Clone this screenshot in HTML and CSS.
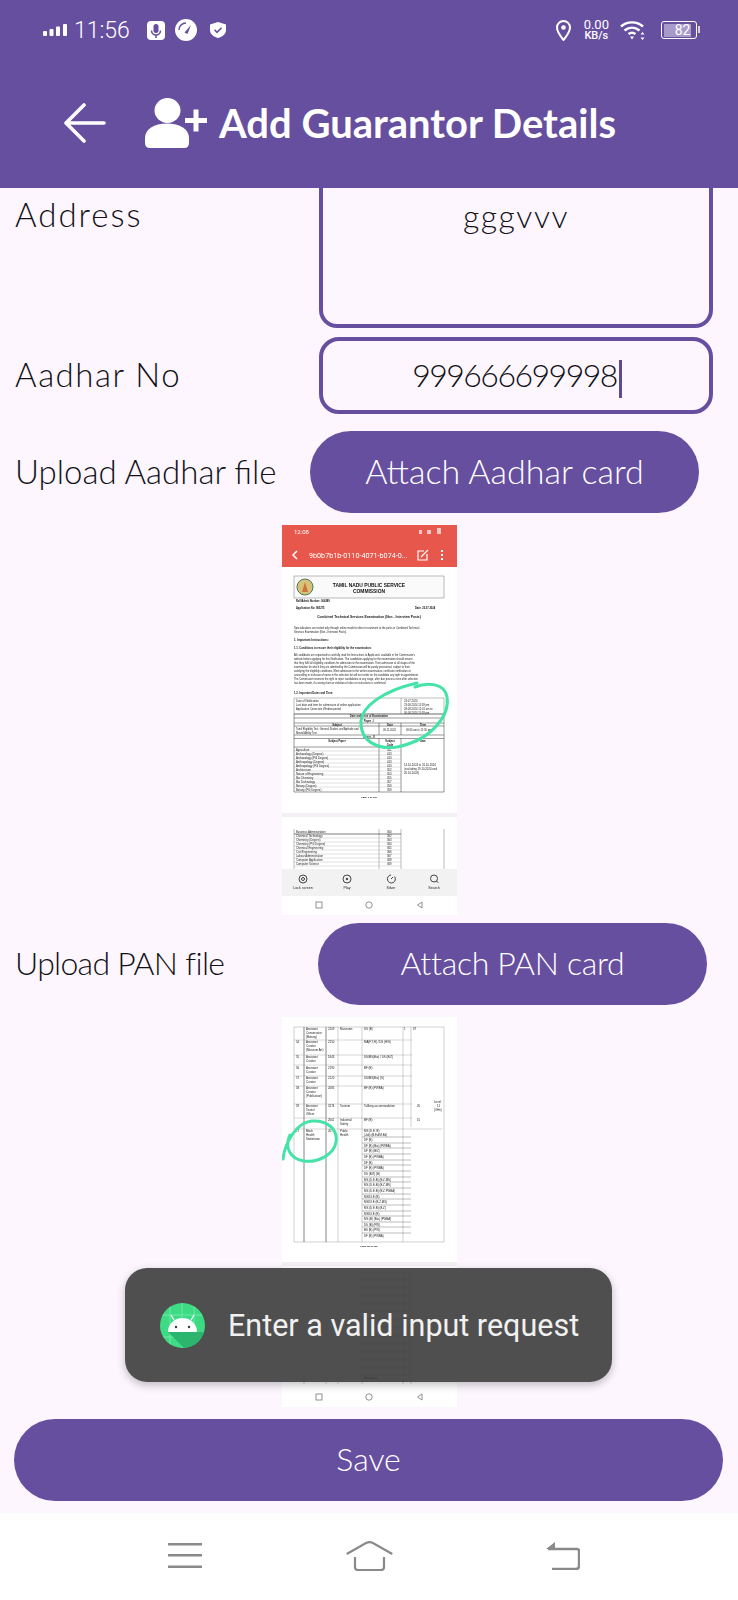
FILE: index.html
```html
<!DOCTYPE html>
<html lang="en">
<head>
  <meta charset="UTF-8">
  <meta name="viewport" content="width=device-width, initial-scale=1.0">
  <title>Add Guarantor Details</title>
  <link rel="stylesheet" href="styles.css">
</head>
<body>
  <div class="phone">
    <header class="app-header">
      <div class="status-bar">
        <div class="status-group">
          <svg class="signal" width="24" height="12" viewBox="0 0 24 12" fill="#fff"><rect x="0" y="7" width="4" height="5" rx="1"/><rect x="6.500" y="5" width="4" height="7" rx="1"/><rect x="13" y="2.500" width="4" height="9.500" rx="1"/><rect x="20" y="0" width="4" height="12" rx="1"/></svg>
          <span class="clock">11:56</span>
          <svg class="ic-mic" width="18" height="19" viewBox="0 0 18 19"><rect width="18" height="19" rx="4" fill="#fff"/><rect x="6.500" y="3" width="5" height="9" rx="2.500" fill="#674fa0"/><path d="M4.500 9.500a4.500 4.500 0 0 0 9 0M9 14v3" fill="none" stroke="#674fa0" stroke-width="1.500"/></svg>
          <svg class="ic-gauge" width="22" height="22" viewBox="0 0 22 22"><circle cx="11" cy="11" r="11" fill="#fff"/><path d="M4 11a7 7 0 0 1 7-7" fill="none" stroke="#674fa0" stroke-width="1.500"/><path d="M9.500 13.500L16 6l-3.500 9z" fill="#674fa0"/></svg>
          <svg class="ic-shield" width="16" height="16" viewBox="0 0 16 16"><path d="M8 0l8 2.500V8c0 4-3.500 6.800-8 8-4.500-1.200-8-4-8-8V2.500z" fill="#fff"/><path d="M4.500 7.800l2.500 2.500 4.500-4.500" fill="none" stroke="#674fa0" stroke-width="1.600"/></svg>
        </div>
        <div class="status-group">
          <svg class="ic-pin" width="15" height="21" viewBox="0 0 15 21"><path d="M7.500 20C4 15.500 1 12 1 7.500a6.500 6.500 0 0 1 13 0C14 12 11 15.500 7.500 20z" fill="none" stroke="#fff" stroke-width="2"/><circle cx="7.500" cy="7.500" r="2.300" fill="#fff"/></svg>
          <div class="speed"><span class="speed-num">0.00</span><span class="speed-unit">KB/s</span></div>
          <svg class="ic-wifi" width="26" height="20" viewBox="0 0 26 20" fill="none" stroke="#fff" stroke-width="2.400"><path d="M1 6.500C7 1 17 1 23 6.500M4.500 10.500c4.500-3.800 10.500-3.800 15 0M8.500 14c2.300-1.700 4.700-1.700 7 0"/><path d="M10 16.500h4L12 19.500z" fill="#fff" stroke="none"/><path d="M22.500 12l2 2.500h-4zM22.500 20l2-2.500h-4z" fill="#fff" stroke="none"/></svg>
          <div class="battery"><span class="battery-fill">82</span></div>
        </div>
      </div>
      <div class="title-row">
        <svg class="ic-back" width="42" height="40" viewBox="0 0 42 40" fill="none" stroke="#fff" stroke-width="3.600" stroke-linecap="round" stroke-linejoin="round"><path d="M40 20H3M20 2L2 20l18 18"/></svg>
        <svg class="ic-person" width="62" height="50" viewBox="0 0 62 50" fill="#fff"><ellipse cx="22.500" cy="12.500" rx="13" ry="12.500"/><path d="M0 45V40C0 31 9 25.500 22 25.500S44 31 44 40v5q0 5-5 5H5q-5 0-5-5z"/><path d="M40 20h8.500v-8.500h5V20H62v5h-8.500v8.500h-5V25H40z"/></svg>
        <h1 class="title">Add Guarantor Details</h1>
      </div>
    </header>

    <main class="form">
      <div class="row row-address">
        <span class="label label-address">Address</span>
        <div class="field field-address">gggvvv</div>
      </div>
      <div class="row row-aadhar">
        <span class="label label-aadhar">Aadhar No</span>
        <div class="field field-aadhar">999666699998<i class="cursor"></i></div>
      </div>
      <div class="row row-upload">
        <span class="label">Upload Aadhar file</span>
        <button class="pill pill-aadhar">Attach Aadhar card</button>
      </div>

      <svg class="thumb thumb-first" width="175" height="390" viewBox="0 0 175 390">
        <rect width="175" height="390" fill="#fff"/>
        <rect width="175" height="42" fill="#e8574b"/>
        <text x="12" y="9" class="t-white" font-size="6">12:08</text>
        <path d="M137 5h3v4h-3zM145 5h4v4h-4zM155 3h4v6h-4z" fill="#f6c8c3"/>
        <path d="M15 26l-4 4 4 4" fill="none" stroke="#fff" stroke-width="1.500"/>
        <text x="27" y="33" class="t-white" font-size="7.200">9b0b7b1b-0110-4071-b074-0...</text>
        <path d="M142 26h-6v9h9v-6M139 32l7-7" fill="none" stroke="#fff" stroke-width="1.200"/>
        <path d="M160 25v2M160 29v2M160 33v2" stroke="#fff" stroke-width="2"/>
        <rect x="12" y="51" width="150" height="22" fill="#fafafa" stroke="#777" stroke-width=".5"/>
        <circle cx="23" cy="62" r="8" fill="#d8c27a" stroke="#4a7a5a" stroke-width="1"/>
        <path d="M20 67l3-10 3 10z" fill="#c9763a"/>
        <text x="87" y="62" class="t-bold" font-size="4.900" text-anchor="middle">TAMIL NADU PUBLIC SERVICE</text>
        <text x="87" y="68" class="t-bold" font-size="4.900" text-anchor="middle">COMMISSION</text>
        <text x="14" y="77" class="t-bold" font-size="2.600">Roll/Admit Number: 064289</text>
        <text x="14" y="84" class="t-bold" font-size="2.600">Application No: 983275</text>
        <text x="133" y="84" class="t-bold" font-size="2.600">Date: 23.07.2024</text>
        <text x="87" y="93" class="t-bold" font-size="3.300" text-anchor="middle">Combined Technical Services Examination (Non - Interview Posts)</text>
        <text x="12" y="104" class="t-doc" font-size="2.600">Specializations are invited only through online mode for direct recruitment to the posts in Combined Technical</text>
        <text x="12" y="108" class="t-doc" font-size="2.600">Services Examination (Non - Interview Posts).</text>
        <text x="12" y="116" class="t-bold" font-size="2.900">1. Important Instructions:</text>
        <text x="12" y="124" class="t-bold" font-size="2.700">1.1. Conditions to ensure their eligibility for the examination:</text>
        <g class="t-doc" font-size="2.600">
          <text x="12" y="131">All candidates are requested to carefully read the Instructions to Applicants' available in the Commission's</text>
          <text x="12" y="135">website before applying for this Notification. The candidates applying for the examination should ensure</text>
          <text x="12" y="139">that they fulfil all eligibility conditions for admission to the examination. Their admission at all stages of the</text>
          <text x="12" y="143">examination for which they are admitted by the Commission will be purely provisional, subject to their</text>
          <text x="12" y="147">satisfying the eligibility conditions. Mere admission to the written examination, certificate verification or</text>
          <text x="12" y="151">counselling or inclusion of name in the selection list will not confer on the candidate any right to appointment.</text>
          <text x="12" y="155">The Commission reserves the right to reject candidature at any stage, after due process even after selection</text>
          <text x="12" y="159">has been made, if a wrong claim or violation of rules or instructions is confirmed.</text>
        </g>
        <text x="12" y="169" class="t-bold" font-size="2.700">1.2. Important Dates and Time:</text>
        <path d="M12 173h150v16H12zM119 173v16" fill="none" stroke="#555" stroke-width=".4"/>
        <g class="t-doc" font-size="2.700">
          <text x="14" y="177">Date of Notification</text>
          <text x="14" y="181">Last date and time for submission of online application</text>
          <text x="14" y="185">Application Correction Window period</text>
          <text x="122" y="177">23.07.2024</text>
          <text x="122" y="181">23.08.2024 11:59 pm</text>
          <text x="122" y="185">28.08.2024 12:01 am to</text>
          <text x="122" y="189">30.08.2024 11:59 pm</text>
        </g>
        <path d="M12 189h150M12 193h150M12 198h150M12 201h150M12 210h150M97 198v12M119 198v12M12 189v24M162 189v24" fill="none" stroke="#333" stroke-width=".5"/>
        <g class="t-bold" font-size="2.700" text-anchor="middle">
          <text x="87" y="192">Date and Time of Examination</text>
          <text x="87" y="197">Paper - I</text>
          <text x="55" y="200.500">Subject</text>
          <text x="108" y="200.500">Date</text>
          <text x="141" y="200.500">Time</text>
          <text x="87" y="212.500">Paper - II</text>
        </g>
        <g class="t-doc" font-size="2.600">
          <text x="14" y="205">Tamil Eligibility Test, General Studies and Aptitude and</text>
          <text x="14" y="208.500">Mental Ability Test</text>
          <text x="101" y="206">09.11.2024</text>
          <text x="124" y="206">09:30 am to 12:30 pm</text>
        </g>
        <path d="M12 213.500h150M12 222h85M12 267h150M12 213v54M97 213v54M119 213v54M162 213v54" fill="none" stroke="#333" stroke-width=".5"/>
        <path d="M12 226h107M12 230h107M12 234h107M12 238h107M12 242h107M12 246h107M12 250h107M12 254h107M12 258h107M12 262h107" fill="none" stroke="#aaa" stroke-width=".35"/>
        <g class="t-bold" font-size="2.600" text-anchor="middle">
          <text x="55" y="217">Subject Paper</text>
          <text x="108" y="217">Subject</text>
          <text x="108" y="221">Code</text>
          <text x="141" y="217">Date</text>
        </g>
        <g class="t-doc" font-size="2.800">
          <text x="14" y="225.500">Agriculture</text>
          <text x="14" y="229.500">Archaeology (Degree)</text>
          <text x="14" y="233.500">Archaeology (PG Degree)</text>
          <text x="14" y="237.500">Anthropology (Degree)</text>
          <text x="14" y="241.500">Anthropology (PG Degree)</text>
          <text x="14" y="245.500">Architecture</text>
          <text x="14" y="249.500">Nature of Engineering</text>
          <text x="14" y="253.500">Bio Chemistry</text>
          <text x="14" y="257.500">Bio Technology</text>
          <text x="14" y="261.500">Botany (Degree)</text>
          <text x="14" y="265.500">Botany (PG Degree)</text>
          <text x="105" y="225.500">351</text><text x="105" y="229.500">413</text><text x="105" y="233.500">413</text><text x="105" y="237.500">413</text><text x="105" y="241.500">413</text><text x="105" y="245.500">352</text><text x="105" y="249.500">353</text><text x="105" y="253.500">355</text><text x="105" y="257.500">357</text><text x="105" y="261.500">359</text><text x="105" y="265.500">359</text>
          <text x="122" y="241">14.10.2024 to 31.10.2024</text>
          <text x="122" y="245">(excluding 19.10.2024 and</text>
          <text x="122" y="249">26.10.2024)</text>
        </g>
        <text x="87" y="273" class="t-bold" font-size="2.500" text-anchor="middle">Page 1 of 109</text>
        <rect y="288" width="175" height="4" fill="#f4eef5"/>
        <path d="M97 304v40M119 304v40M162 304v40M12 304v40" fill="none" stroke="#555" stroke-width=".4"/>
        <path d="M12 309h107" stroke="#222" stroke-width=".6"/>
        <path d="M12 313h107M12 317h107M12 321h107M12 325h107M12 329h107M12 333h107M12 337h107M12 341h107" stroke="#aaa" stroke-width=".35"/>
        <g class="t-doc" font-size="2.800">
          <text x="14" y="308">Business Administration</text>
          <text x="14" y="312">Chemical Technology</text>
          <text x="14" y="316">Chemistry (Degree)</text>
          <text x="14" y="320">Chemistry (PG Degree)</text>
          <text x="14" y="324">Chemical Engineering</text>
          <text x="14" y="328">Civil Engineering</text>
          <text x="14" y="332">Labour Administration</text>
          <text x="14" y="336">Computer Application</text>
          <text x="14" y="340">Computer Science</text>
          <text x="105" y="308">360</text><text x="105" y="312">362</text><text x="105" y="316">363</text><text x="105" y="320">364</text><text x="105" y="324">365</text><text x="105" y="328">366</text><text x="105" y="332">367</text><text x="105" y="336">368</text><text x="105" y="340">369</text>
        </g>
        <rect y="344" width="175" height="27" fill="#f2f2f2"/>
        <g fill="none" stroke="#333" stroke-width=".9">
          <circle cx="21" cy="354" r="4"/><circle cx="21" cy="354" r="1.500"/>
          <circle cx="65" cy="354" r="4"/><circle cx="65" cy="354" r=".8" fill="#333"/>
          <path d="M112.500 351.500a4 4 0 1 1-3.500-1.500M109 354l2-2"/>
          <circle cx="152" cy="353.500" r="3.500"/><path d="M154.500 356l2 2"/>
        </g>
        <g class="t-doc" font-size="3.600" text-anchor="middle">
          <text x="21" y="364">Lock screen</text>
          <text x="65" y="364">Play</text>
          <text x="109" y="364">Silver</text>
          <text x="152" y="364">Search</text>
        </g>
        <g fill="none" stroke="#777" stroke-width=".8">
          <rect x="34" y="377" width="6" height="6"/>
          <circle cx="87" cy="380" r="3.200"/>
          <path d="M140 377v6l-4.500-3z"/>
        </g>
        <path d="M133 162C145 157 163 158 165 172 168 190 150 215 115 222 95 225 78 216 79 196 80 182 100 166 135 158" fill="none" stroke="#45e3a8" stroke-width="3" stroke-linecap="round"/>
      </svg>

      <div class="row row-upload-pan">
        <span class="label label-pan">Upload PAN file</span>
        <button class="pill pill-pan">Attach PAN card</button>
      </div>

      <svg class="thumb thumb-second" width="175" height="390" viewBox="0 0 175 390">
        <rect width="175" height="390" fill="#fff"/>
        <path d="M12 10h150v215H12zM56 10v215M80 10v215M121 10v215M129 10v100" fill="none" stroke="#888" stroke-width=".4"/>
        <path d="M22 10v215M44 10v215" stroke="#333" stroke-width=".6"/>
        <path d="M12 23h118M12 38h118M12 48h118M12 59h118M12 69h118M12 87h118M12 101h118M12 112h148" fill="none" stroke="#999" stroke-width=".4"/>
        <path d="M80 120h49M80 126h49M80 131h49M80 137h49M80 143h49M80 148h49M80 154h49M80 160h49M80 165h49M80 171h49M80 177h49M80 182h49M80 188h49M80 194h49M80 199h49M80 205h49M80 210h49M80 216h49" stroke="#555" stroke-width=".4"/>
        <g class="t-doc" font-size="2.900">
          <text x="24" y="13">Assistant</text><text x="24" y="17">Conservator</text><text x="24" y="21">(Botany)</text>
          <text x="46" y="13">2109</text><text x="58" y="13">Museums</text><text x="82" y="13">DS (B)</text><text x="122" y="13">1</text><text x="131" y="13">67</text>
          <text x="24" y="26">Assistant</text><text x="24" y="30">Curator</text><text x="24" y="34">(Museum Art)</text>
          <text x="46" y="26">2150</text><text x="82" y="26">MA(F,T,H) / DS (H/S)</text><text x="14" y="26">54</text>
          <text x="24" y="41">Assistant</text><text x="24" y="45">Curator</text><text x="46" y="41">1843</text><text x="82" y="41">DS/MS(Bio) / DS (B/Z)</text><text x="14" y="41">55</text>
          <text x="24" y="52">Assistant</text><text x="24" y="56">Curator</text><text x="46" y="52">2190</text><text x="82" y="52">BF (B)</text><text x="14" y="52">56</text>
          <text x="24" y="62">Assistant</text><text x="24" y="66">Curator</text><text x="46" y="62">2120</text><text x="82" y="62">DS/MS(Bio) (S)</text><text x="14" y="62">57</text>
          <text x="24" y="72">Assistant</text><text x="24" y="76">Curator</text><text x="24" y="80">(Publication)</text><text x="46" y="72">2085</text><text x="82" y="72">BF (B) (PWBA)</text><text x="14" y="72">58</text>
          <text x="24" y="90">Assistant</text><text x="24" y="94">Tourist</text><text x="24" y="98">Officer</text><text x="46" y="90">3174</text><text x="58" y="90">Tourism</text><text x="82" y="90">Tallking accommodation</text><text x="14" y="90">59</text><text x="135" y="90">20</text>
          <text x="46" y="104">2601</text><text x="58" y="104">Industrial</text><text x="58" y="108">Safety</text><text x="82" y="104">BF (B)</text><text x="135" y="104">15</text>
          <text x="24" y="115">Block</text><text x="24" y="119">Health</text><text x="24" y="123">Statistician</text><text x="14" y="115">17</text><text x="46" y="115">2071</text><text x="58" y="115">Public</text><text x="58" y="119">Health</text>
          <text x="152" y="86">Level</text><text x="155" y="90">11</text><text x="152" y="94">(OHs)</text>
          <text x="82" y="115">MS (D.E. B)</text><text x="82" y="119">(Job) (B.Ed/M.Ed)</text>
          <text x="82" y="124">DF (B)</text><text x="82" y="130">DF (B) (Bio) (PWBA)</text><text x="82" y="135">DF (B) (B/Z)</text>
          <text x="82" y="141">DF (B) (PWBA)</text><text x="82" y="147">DF (B)</text><text x="82" y="152">DF (B) (PWBA)</text>
          <text x="82" y="158">DS (B/Z) (B)</text><text x="82" y="164">MS (D.E.B) (B.Z.MS)</text><text x="82" y="169">MS (D.E.B) (B.Z.MS)</text>
          <text x="82" y="175">MS (D.E.B) (B.Z.PWBA)</text><text x="82" y="181">MS/DI.E (B)</text><text x="82" y="186">MS/DI.E (B.Z.MS)</text>
          <text x="82" y="192">MS (D.E.B) (B.Z)</text><text x="82" y="198">MS/DI.E (B)</text><text x="82" y="203">MS (B) (Bio) (PWBA)</text>
          <text x="82" y="209">DS (B) (PW)</text><text x="82" y="214">BS (B) (PW)</text><text x="82" y="220">DF (B) (PWBA)</text>
        </g>
        <text x="87" y="230" class="t-bold" font-size="2.500" text-anchor="middle">Page 18 of 109</text>
        <rect y="245" width="175" height="4" fill="#f4eef5"/>
        <path d="M22 252v115M44 252v115M56 252v115M80 252v115M121 252v115M129 252v115" fill="none" stroke="#888" stroke-width=".4"/>
        <path d="M80 262h49M80 270h49M80 278h49M80 286h49M80 294h49M80 302h49M80 310h49M80 318h49M80 326h49M80 334h49M80 342h49M80 350h49M80 358h49M80 364h49" stroke="#666" stroke-width=".4"/>
        <text x="82" y="362" class="t-bold" font-size="3">Statistics</text>
        <g fill="none" stroke="#777" stroke-width=".8">
          <rect x="34" y="377" width="6" height="6"/>
          <circle cx="87" cy="380" r="3.200"/>
          <path d="M140 377v6l-4.500-3z"/>
        </g>
        <path d="M1 142C3 125 15 105 30 104 45 103 56 112 54 125 52 138 35 146 22 144 8 142 2 130 8 118" fill="none" stroke="#45e3a8" stroke-width="3" stroke-linecap="round"/>
      </svg>

      <button class="pill pill-save">Save</button>
    </main>

    <nav class="nav-bar">
      <svg width="34" height="25" viewBox="0 0 34 25" fill="#8a8a8a"><rect width="34" height="2.500"/><rect y="11" width="34" height="2.500"/><rect y="22.500" width="34" height="2.500"/></svg>
      <svg class="nav-home" width="47" height="30" viewBox="0 0 47 30" fill="none" stroke="#8a8a8a" stroke-width="2.200"><path d="M.7 13L20.500 1.800q3-1.300 6 0L46.300 13"/><path d="M9 16v10q0 3 3 3h23q3 0 3-3V16"/></svg>
      <svg width="34" height="28" viewBox="0 0 34 28" fill="none" stroke="#8a8a8a" stroke-width="2.400"><path d="M2 7h29q2 0 2 2v15q0 3-3 3H6"/><path d="M9 0v7H0z" fill="#8a8a8a" stroke="none"/></svg>
    </nav>

    <div class="toast">
      <svg class="toast-icon" width="45" height="45" viewBox="0 0 45 45">
        <defs><clipPath id="droid"><circle cx="22.500" cy="22.500" r="22.500"/></clipPath></defs>
        <circle cx="22.500" cy="22.500" r="22.500" fill="#3ddc84"/>
        <g clip-path="url(#droid)">
          <path d="M10 0v45M22 0v45M34 0v45M0 12h45M0 34h45" stroke="#7fe8ad" stroke-width=".8"/>
          <path d="M8 29l25 25 20-25z" fill="#2cb56c"/>
        </g>
        <path d="M8 29a14.500 14 0 0 1 29 0z" fill="#fff"/>
        <path d="M14 17l-3-5M31 17l3-5" stroke="#fff" stroke-width="1.200"/>
        <circle cx="16" cy="24" r="1.200" fill="#3a3a3a"/><circle cx="29" cy="24" r="1.200" fill="#3a3a3a"/>
      </svg>
      <span class="toast-text">Enter a valid input request</span>
    </div>
  </div>
</body>
</html>
```

FILE: styles.css
```css
* {
  box-sizing: border-box;
}
body {
  margin: 0;
  background-color: #fdf6ff;
  font-family: Lato, "Open Sans", sans-serif;
  color: #121116;
}
.phone {
  position: relative;
  width: 738px;
  height: 1600px;
  overflow: hidden;
  display: flex;
  flex-direction: column;
}

/* header */
.app-header {
  height: 188px;
  flex: none;
  background-color: #674fa0;
  color: #fff;
}
.status-bar {
  height: 60px;
  padding: 0 41px 0 43px;
  display: flex;
  justify-content: space-between;
  align-items: center;
}
.status-group {
  display: flex;
  align-items: center;
}
.clock {
  margin-left: 7px;
  font-family: Roboto, sans-serif;
  font-size: 23px;
  font-weight: 300;
}
.ic-mic {
  margin-left: 17px;
}
.ic-gauge {
  margin-left: 10px;
}
.ic-shield {
  margin-left: 13px;
}
.speed {
  margin-left: 13px;
  display: flex;
  flex-direction: column;
  align-items: center;
  font-family: Roboto, sans-serif;
  line-height: 11px;
}
.speed-num {
  font-size: 13px;
}
.speed-unit {
  font-size: 11px;
  font-weight: 500;
}
.ic-wifi {
  margin-left: 11px;
}
.battery {
  position: relative;
  margin-left: 15px;
  width: 36px;
  height: 18px;
  border: 1.500px solid #fff;
  border-radius: 3px;
  padding: 1.500px;
}
.battery::after {
  content: "";
  position: absolute;
  right: -3.500px;
  top: 4px;
  width: 1.500px;
  height: 7px;
  background-color: #d8d0ea;
}
.battery-fill {
  display: block;
  width: 27px;
  height: 100%;
  background-color: #a89bcb;
  font-family: Roboto, sans-serif;
  font-size: 14px;
  line-height: 12px;
  text-align: right;
  color: #fff;
}
.title-row {
  margin-top: 38px;
  padding-left: 64px;
  height: 50px;
  display: flex;
  align-items: center;
}
.ic-person {
  margin-left: 39px;
}
.title {
  margin: 0 0 0 12px;
  font-size: 40px;
  font-weight: 700;
  line-height: 50px;
  white-space: nowrap;
}

/* form */
.form {
  flex: 1;
  display: flex;
  flex-direction: column;
}
.row {
  display: flex;
  align-items: center;
  padding-left: 15px;
}
.label {
  font-size: 33px;
  font-weight: 300;
  white-space: nowrap;
  margin-bottom: 3px;
}
.label-address {
  letter-spacing: 2px;
}
.label-aadhar {
  letter-spacing: 1.500px;
}
.label-pan {
  font-size: 32px;
  letter-spacing: -0.700px;
}
.field {
  margin-left: auto;
  margin-right: 25px;
  width: 394px;
  border: 4px solid #674fa0;
  text-align: center;
  font-size: 32px;
  font-weight: 300;
}
.row-address {
  height: 140px;
  align-items: flex-start;
}
.row-address .label {
  margin-top: 6px;
}
.field-address {
  height: 140px;
  border-top: none;
  border-radius: 0 0 18px 18px;
  padding-top: 8px;
  letter-spacing: 1.500px;
}
.row-aadhar {
  margin-top: 9px;
  height: 77px;
}
.field-aadhar {
  height: 77px;
  border-radius: 20px;
  line-height: 67px;
  padding-left: 2px;
  letter-spacing: -1.500px;
}
.cursor {
  display: inline-block;
  width: 3px;
  height: 38px;
  margin-left: 2px;
  vertical-align: middle;
  background-color: #5d4a8f;
}
.pill {
  height: 82px;
  border: none;
  border-radius: 41px;
  background-color: #674fa0;
  color: #fff;
  font-family: inherit;
  font-size: 32px;
  font-weight: 300;
  padding: 0 0 4px;
}
.row-upload {
  margin-top: 17px;
  justify-content: space-between;
  padding-right: 39px;
}
.pill-aadhar {
  width: 389px;
  font-size: 34px;
}
.row-upload-pan {
  margin-top: 8px;
  justify-content: space-between;
  padding-right: 31px;
}
.pill-pan {
  width: 389px;
  letter-spacing: -0.300px;
}
.thumb {
  flex: none;
  display: block;
  align-self: center;
  margin-left: 1px;
  filter: blur(0.35px);
}
.thumb-first {
  margin-top: 12px;
}
.thumb-second {
  margin-top: 12px;
}
.pill-save {
  flex: none;
  margin: 12px 15px 0 14px;
}
.t-doc {
  font-family: "Liberation Sans", sans-serif;
  fill: #222;
}
.t-bold {
  font-family: "Liberation Sans", sans-serif;
  font-weight: 700;
  fill: #111;
}
.t-white {
  font-family: Roboto, sans-serif;
  fill: #fff;
}

/* bottom bar */
.nav-bar {
  height: 87px;
  flex: none;
  background-color: #fff;
  display: flex;
  align-items: center;
  padding: 0 158px 2px 168px;
  justify-content: space-between;
}
.nav-home {
  margin-right: 9px;
}

/* toast over the content */
.toast {
  position: absolute;
  left: 125px;
  top: 1268px;
  width: 487px;
  height: 114px;
  display: flex;
  align-items: center;
  padding-left: 35px;
  border-radius: 22px;
  background-color: rgba(64, 64, 64, 0.92);
  box-shadow: 0 3px 8px rgba(0, 0, 0, 0.25);
}
.toast-text {
  margin-left: 23px;
  font-family: Roboto, sans-serif;
  font-size: 30.500px;
  color: #f1f1f1;
  white-space: nowrap;
}
```
